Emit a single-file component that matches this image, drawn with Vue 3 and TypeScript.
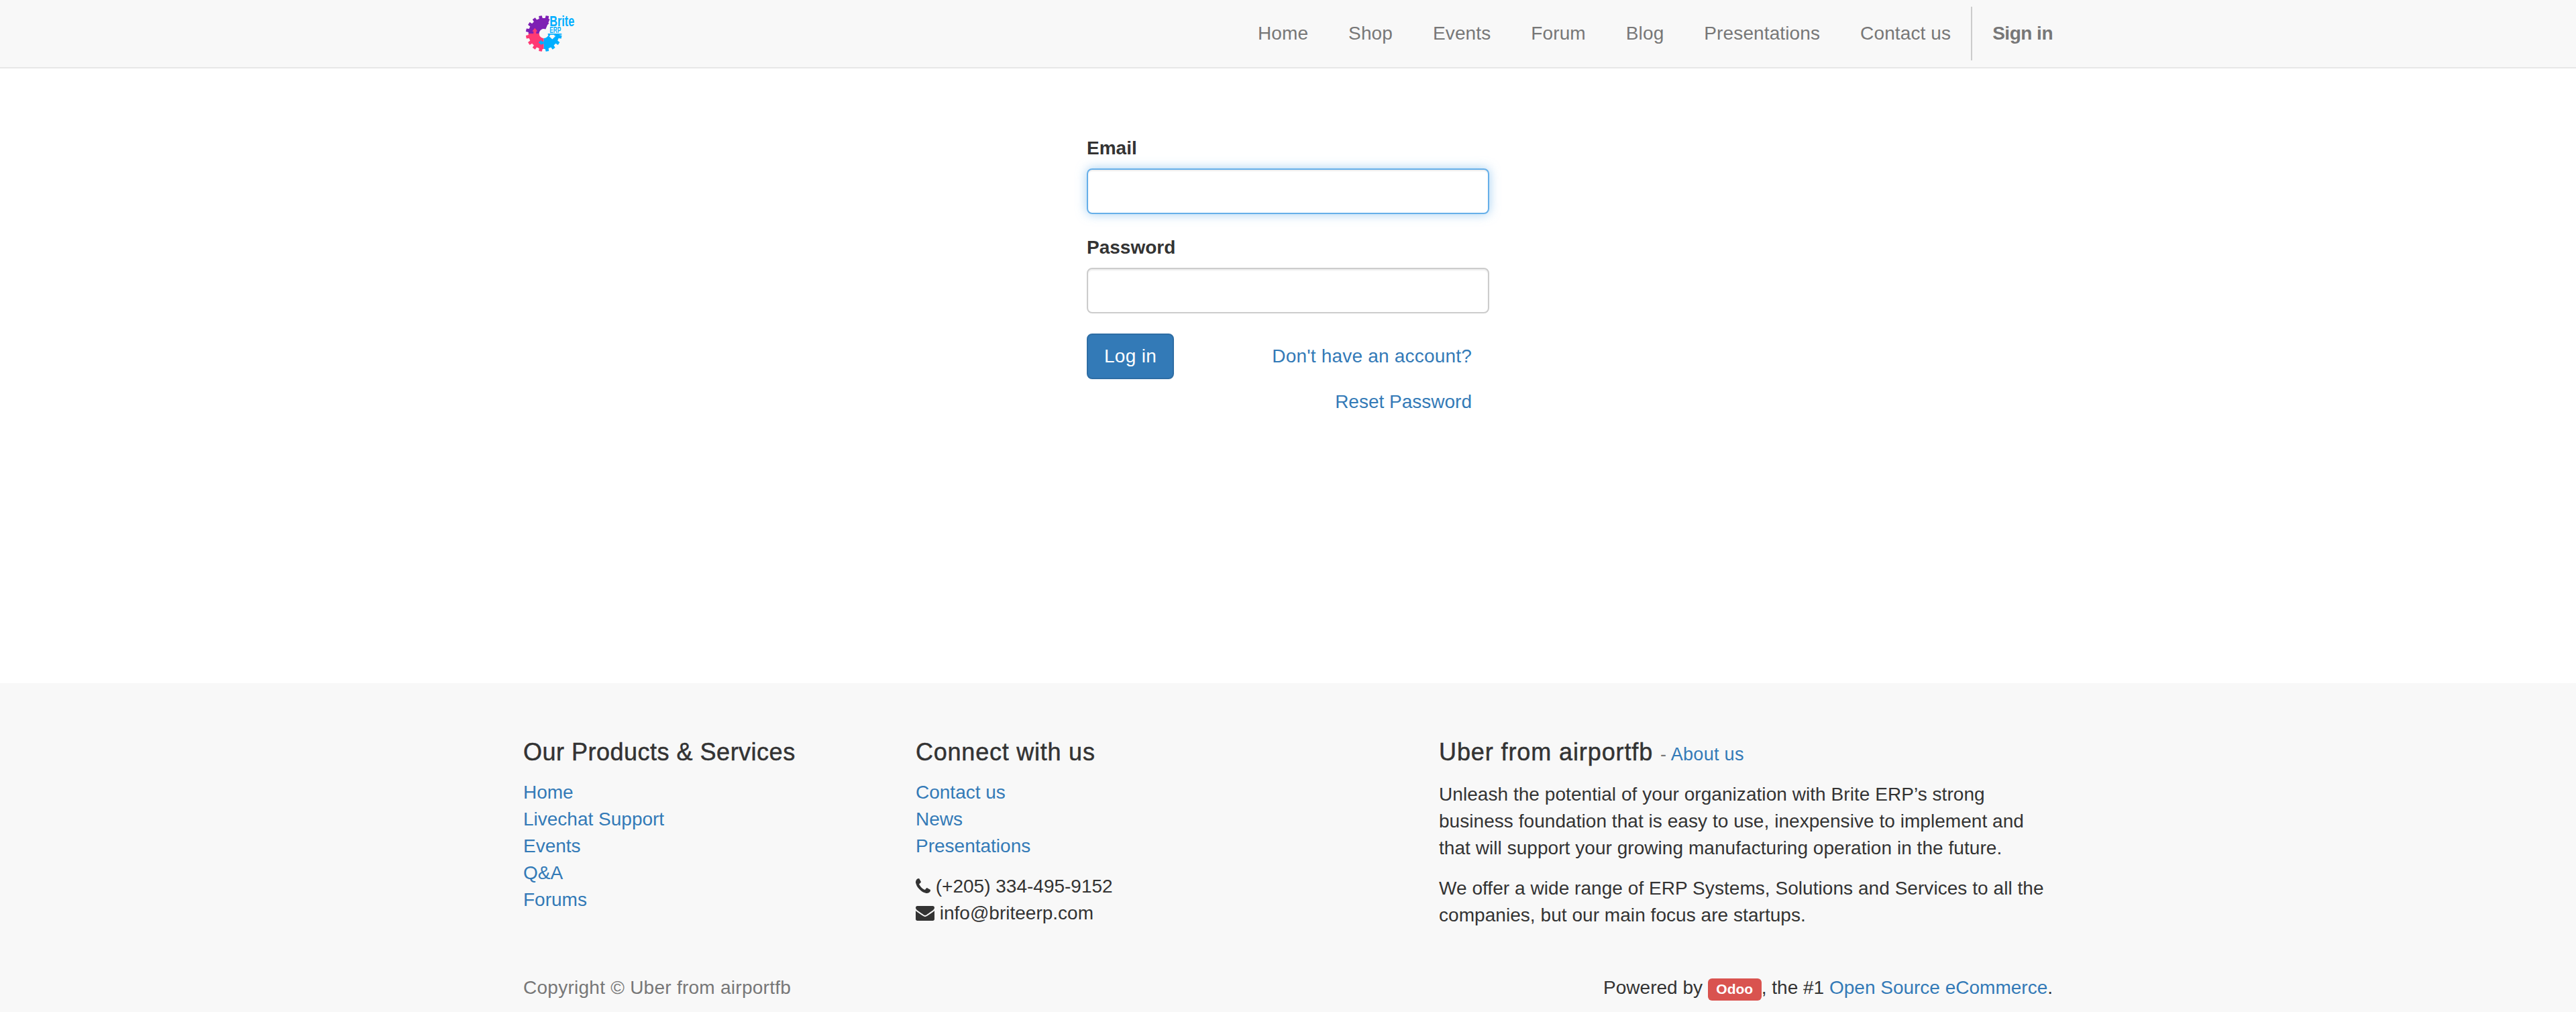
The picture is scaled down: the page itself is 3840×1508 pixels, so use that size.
<script setup lang="ts">
import { computed } from 'vue'

const navLinks = ['Home', 'Shop', 'Events', 'Forum', 'Blog', 'Presentations', 'Contact us']
const products = ['Home', 'Livechat Support', 'Events', 'Q&A', 'Forums']
const connect = ['Contact us', 'News', 'Presentations']

const cx = 30.7
const cy = 40

// one slice of the logo cog, angles in degrees clockwise from 12 o'clock
function cogSlice(from: number, to: number) {
  const pt = (r: number, a: number) => {
    const t = (a * Math.PI) / 180
    return `${(cx + r * Math.sin(t)).toFixed(2)} ${(cy - r * Math.cos(t)).toFixed(2)}`
  }
  const pitch = 22.5
  let d = `M${pt(7, from)} L${pt(23, from)}`
  for (let a = from; a < to - 0.1; a += pitch) {
    d += ` L${pt(23, a + pitch * 0.22)} L${pt(27, a + pitch * 0.28)} L${pt(27, a + pitch * 0.72)} L${pt(23, a + pitch * 0.78)} L${pt(23, a + pitch)}`
  }
  d += ` L${pt(7, to)} A7 7 0 0 0 ${pt(7, from)} Z`
  return d
}

const purple = computed(() => cogSlice(270, 382.5))
const pink = computed(() => cogSlice(180, 270))
const blue = computed(() => cogSlice(90, 180))
</script>

<template>
  <div class="page">
    <header class="navbar">
      <div class="container nav-row">
        <a class="brand" href="#">
          <svg width="100" height="70" viewBox="0 0 100 70">
            <path :d="purple" fill="#7e1fb4" />
            <path d="M30 23.300 H34 V21.500 L38.500 25 L34 28.500 V26.700 H30 Z" fill="#7e1fb4" />
            <path :d="pink" fill="#ff3a74" />
            <path d="M15.300 40 V36.700 H13.300 L17.300 31.700 L21.300 36.700 H19.300 V40 Z" fill="#ff3a74" />
            <path :d="blue" fill="#00aeff" />
            <path d="M30.700 51.700 H27.300 V49.300 L22.700 53.300 L27.300 57.300 V55.700 H30.700 Z" fill="#00aeff" />
            <rect x="36.700" y="40" width="20.600" height="1.700" fill="#00aeff" />
            <path d="M40 41.700 H46.500 V43.500 H48.500 L43.300 48.500 L38 43.500 H40 Z" fill="#f8f8f8" />
            <text x="39.300" y="29" class="logo-big" textLength="37" lengthAdjust="spacingAndGlyphs">Brite</text>
            <text x="39.300" y="39" class="logo-small" textLength="17" lengthAdjust="spacingAndGlyphs">ERP</text>
          </svg>
        </a>
        <nav class="nav-links">
          <a v-for="link in navLinks" :key="link" href="#">{{ link }}</a>
          <a class="sign-in" href="#">Sign in</a>
        </nav>
      </div>
    </header>

    <main class="main">
      <form class="login" @submit.prevent>
        <div class="field">
          <label for="login">Email</label>
          <input id="login" class="focused" type="text" />
        </div>
        <div class="field">
          <label for="password">Password</label>
          <input id="password" type="password" />
        </div>
        <div class="actions">
          <button type="submit">Log in</button>
          <a href="#">Don't have an account?</a>
        </div>
        <div class="reset"><a href="#">Reset Password</a></div>
      </form>
    </main>

    <footer class="footer">
      <div class="container">
        <div class="columns">
          <section>
            <h4>Our Products &amp; Services</h4>
            <ul>
              <li v-for="item in products" :key="item"><a href="#">{{ item }}</a></li>
            </ul>
          </section>
          <section>
            <h4>Connect with us</h4>
            <ul class="connect">
              <li v-for="item in connect" :key="item"><a href="#">{{ item }}</a></li>
            </ul>
            <ul>
              <li class="contact">
                <svg class="phone" viewBox="192 128 1408 1408" width="22" height="22">
                  <path fill="#333" d="M1600 1240q0 27-10 70.500t-21 68.500q-21 50-122 106-94 51-186 51-27 0-53-3.500t-57.500-12.500-47-14.500-55.500-20.500-49-18q-98-35-175-83-127-79-264-216t-216-264q-48-77-83-175-3-9-18-49t-20.500-55.500-14.500-47-12.500-57.500-3.500-53q0-92 51-186 56-101 106-122 25-11 68.500-21t70.500-10q14 0 21 3 18 6 53 76 11 19 30 54t35 63.500 31 53.500q3 4 17.500 25t21.500 35.500 7 28.500q0 20-28.500 50t-62 55-62 53-28.500 46q0 9 5 22.500t8.500 20.500 14 24 11.500 19q76 137 174 235t235 174q2 1 19 11.500t24 14 20.500 8.500 22.500 5q18 0 46-28.500t53-62 55-62 50-28.500q14 0 28.500 7t35.500 21.500 25 17.500q25 15 53.500 31t63.500 35 54 30q70 35 76 53 3 7 3 21z" />
                </svg>
                (+205) 334-495-9152
              </li>
              <li class="contact">
                <svg class="envelope" viewBox="0 256 1792 1408" width="28" height="22">
                  <path fill="#333" d="M1792 710v794q0 66-47 113t-113 47h-1472q-66 0-113-47t-47-113v-794q44 49 101 87 362 246 497 345 57 42 92.500 65.500t94.500 48 110 24.500h2q51 0 110-24.500t94.500-48 92.500-65.500q170-123 498-345 57-39 100-87zm0-294q0 79-49 151t-122 123q-376 261-468 325-10 7-42.500 30.500t-54 38-52 32.500-57.500 27-50 9h-2q-23 0-50-9t-57.500-27-52-32.500-54-38-42.500-30.500q-91-64-262-182.500t-205-142.500q-62-42-117-115.500t-55-136.500q0-78 41.500-130t118.500-52h1472q65 0 112.500 47t47.500 113z" />
                </svg>
                info@briteerp.com
              </li>
            </ul>
          </section>
          <section>
            <h4>Uber from airportfb <small>- <a href="#">About us</a></small></h4>
            <p>Unleash the potential of your organization with Brite ERP’s strong business foundation that is easy to use, inexpensive to implement and that will support your growing manufacturing operation in the future.</p>
            <p>We offer a wide range of ERP Systems, Solutions and Services to all the companies, but our main focus are startups.</p>
          </section>
        </div>
        <div class="bottom">
          <span class="copyright">Copyright © Uber from airportfb</span>
          <span>Powered by <a class="odoo" href="#">Odoo</a>, the #1 <a href="#">Open Source eCommerce</a>.</span>
        </div>
      </div>
    </footer>
  </div>
</template>

<style scoped>
.page {
  display: flex;
  flex-direction: column;
  min-height: 1508px;
  font-family: "Liberation Sans", Arial, sans-serif;
  font-size: 28px;
  line-height: 40px;
  color: #333;
  background: #fff;
}

a {
  color: #337ab7;
  text-decoration: none;
}

.container {
  width: 2340px;
  margin: 0 auto;
  padding: 0 30px;
  box-sizing: border-box;
}

.navbar {
  height: 102px;
  box-sizing: border-box;
  background: #f8f8f8;
  border-bottom: 2px solid #e7e7e7;
}

.nav-row {
  display: flex;
  justify-content: space-between;
  align-items: flex-start;
}

.brand {
  display: block;
  height: 70px;
  margin-top: 10px;
}

.logo-big {
  font-size: 22px;
  font-weight: 700;
  fill: #00aeff;
}

.logo-small {
  font-size: 12.5px;
  font-weight: 700;
  fill: #00aeff;
}

.nav-links {
  display: flex;
  margin-right: -30px;
}

.nav-links a {
  padding: 30px;
  color: #777;
  letter-spacing: 0.12px;
}

.nav-links .sign-in {
  margin: 10px 0;
  padding: 20px 30px;
  border-left: 2px solid #ccc;
  font-weight: 700;
  letter-spacing: -0.5px;
}

.main {
  flex: 1;
}

.login {
  width: 600px;
  margin: 0 auto;
  padding-top: 99px;
}

.field {
  margin-bottom: 30px;
}

label {
  display: block;
  margin-bottom: 10px;
  font-weight: 700;
}

input {
  display: block;
  width: 100%;
  height: 68px;
  box-sizing: border-box;
  padding: 12px 24px;
  border: 2px solid #ccc;
  border-radius: 8px;
  background: #fff;
  box-shadow: inset 0 2px 2px rgba(0, 0, 0, 0.075);
  font: inherit;
  outline: none;
}

input.focused {
  border-color: #66afe9;
  box-shadow: inset 0 2px 2px rgba(0, 0, 0, 0.075), 0 0 16px rgba(102, 175, 233, 0.6);
}

.actions {
  display: flex;
  justify-content: space-between;
  align-items: center;
  height: 68px;
  padding-right: 26px;
  letter-spacing: 0.2px;
}

button {
  height: 68px;
  padding: 0 24px;
  border: 2px solid #2e6da4;
  border-radius: 8px;
  background: #337ab7;
  color: #fff;
  font: inherit;
  letter-spacing: 0.3px;
}

.reset {
  padding-right: 26px;
  line-height: 68px;
  text-align: right;
}

.footer {
  height: 490px;
  box-sizing: border-box;
  padding-top: 83px;
  background: #f8f8f8;
}

.columns {
  display: grid;
  grid-template-columns: 585px 780px 1fr;
  height: 351px;
}

h4 {
  margin: 0 0 20px;
  font-size: 36px;
  font-weight: 500;
  line-height: 40px;
  letter-spacing: 0.5px;
  -webkit-text-stroke: 0.5px #333;
}

section:nth-child(2) h4 {
  letter-spacing: 0.77px;
}

section:nth-child(3) h4 {
  letter-spacing: 0.9px;
}

h4 small {
  font-size: 27px;
  font-weight: 400;
  color: #777;
  letter-spacing: 0.3px;
  -webkit-text-stroke: 0;
}

ul {
  margin: 0;
  padding: 0;
  list-style: none;
}

.connect {
  margin-bottom: 20px;
}

.contact .phone {
  vertical-align: -1px;
}

.contact .envelope {
  vertical-align: -2px;
}

p {
  margin: 0 0 20px;
  width: 915px;
  letter-spacing: 0.05px;
}

.bottom {
  display: flex;
  justify-content: space-between;
}

.copyright {
  color: #777;
  letter-spacing: 0.26px;
}

.odoo {
  display: inline;
  padding: 4px 12.6px 6px;
  border-radius: 6px;
  background: #d9534f;
  color: #fff;
  font-size: 21px;
  font-weight: 700;
  line-height: 1;
}
</style>

<style>
html,
body {
  margin: 0;
  background: #fff;
}
</style>
